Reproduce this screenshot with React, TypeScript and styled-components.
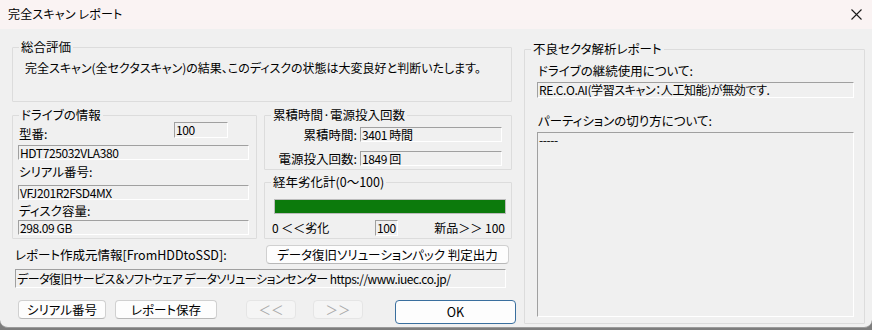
import React, { ReactElement } from 'react'
import styled, { createGlobalStyle } from 'styled-components'

const GlobalStyle = createGlobalStyle`
  html, body {
    margin: 0;
    padding: 0;
    background: #7d7d7d;
  }
  body {
    font-family: 'Noto Sans CJK JP', 'Noto Sans', sans-serif;
    font-size: 12px;
    color: #000;
    font-feature-settings: 'palt';
  }
`

const CloseIcon = (): ReactElement => (
  <svg width="11" height="11" viewBox="0 0 11 11">
    <path d="M0.5 0.5 L10.5 10.5 M10.5 0.5 L0.5 10.5" stroke="#1a1a1a" strokeWidth="1.1" />
  </svg>
)

const App: React.FC = (): ReactElement => {
  return (
    <Window>
      <GlobalStyle />
      <TitleBar>
        <Title>完全スキャン レポート</Title>
        <CloseButton>
          <CloseIcon />
        </CloseButton>
      </TitleBar>
      <Body>
        <LeftColumn>
          <Group $height={55} $top={18}>
            <Legend>総合評価</Legend>
            <SummaryText>
              完全スキャン(全セクタスキャン)の結果、このディスクの状態は大変良好と判断いたします。
            </SummaryText>
          </Group>

          <InfoRow>
            <Group $height={124}>
              <Legend>ドライブの情報</Legend>
              <DriveBody>
                <ModelRow>
                  <FieldLabel>型番:</FieldLabel>
                  <Field $width={54} $height={16}>100</Field>
                </ModelRow>
                <Field>HDT725032VLA380</Field>
                <FieldLabel $gap={4}>シリアル番号:</FieldLabel>
                <Field $gap={5}>VFJ201R2FSD4MX</Field>
                <FieldLabel $gap={3}>ディスク容量:</FieldLabel>
                <Field $gap={1}>298.09 GB</Field>
              </DriveBody>
            </Group>

            <StatsColumn>
              <Group $height={55}>
                <Legend>累積時間·電源投入回数</Legend>
                <StatsGrid>
                  <StatLabel>累積時間:</StatLabel>
                  <Field>3401 時間</Field>
                  <StatLabel>電源投入回数:</StatLabel>
                  <Field>1849 回</Field>
                </StatsGrid>
              </Group>

              <Group $height={57}>
                <Legend>経年劣化計(0〜100)</Legend>
                <HealthBar>
                  <HealthFill style={{ width: '100%' }} />
                </HealthBar>
                <ScaleRow>
                  <ScaleLeft>0 ＜＜劣化</ScaleLeft>
                  <Field $width={23} $height={16}>100</Field>
                  <ScaleRight>新品＞＞ 100</ScaleRight>
                </ScaleRow>
              </Group>
            </StatsColumn>
          </InfoRow>

          <ReportRow>
            <ReportLabel>レポート作成元情報[FromHDDtoSSD]:</ReportLabel>
            <Button $width={243}>データ復旧ソリューションパック 判定出力</Button>
          </ReportRow>

          <SourceField>
            データ復旧サービス＆ソフトウェア データソリューションセンター https://www.iuec.co.jp/
          </SourceField>

          <ButtonRow>
            <Button $width={88}>シリアル番号</Button>
            <Button $width={102} $gap={9}>レポート保存</Button>
            <Button $width={50} $gap={29} disabled>
              ＜＜
            </Button>
            <Button $width={50} $gap={17} disabled>
              ＞＞
            </Button>
            <Button $width={121} $gap={32} $primary>
              OK
            </Button>
          </ButtonRow>
        </LeftColumn>

        <Group $height={275} $top={20}>
          <Legend>不良セクタ解析レポート</Legend>
          <AnalysisBody>
            <FieldLabel>ドライブの継続使用について:</FieldLabel>
            <Field $gap={3} $height={16}>RE.C.O.AI(学習スキャン：人工知能)が無効です.</Field>
            <FieldLabel $gap={15}>パーティションの切り方について:</FieldLabel>
            <Field $gap={3} $height={185}>-----</Field>
          </AnalysisBody>
        </Group>
      </Body>
    </Window>
  )
}

const Window = styled.div`
  width: 872px;
  height: 327px;
  display: flex;
  flex-direction: column;
  background: #f0f0f0;
  border-bottom: 1px solid #9b9b9b;
  border-radius: 0 0 8px 8px;
  overflow: hidden;
`

const TitleBar = styled.div`
  height: 29px;
  flex: none;
  display: flex;
  align-items: center;
  justify-content: space-between;
  padding: 0 8px 3px 8px;
  box-sizing: border-box;
  background: #faf3f3;
`

const Title = styled.span`
  font-size: 12px;
  letter-spacing: 0.2px;
`

const CloseButton = styled.div`
  display: flex;
  padding-right: 2px;
  padding-top: 2px;
`

const Body = styled.div`
  display: grid;
  grid-template-columns: 500px 341px;
  column-gap: 12px;
  align-items: start;
  padding-left: 12px;
`

const LeftColumn = styled.div`
  display: flex;
  flex-direction: column;
`

const Group = styled.div<{ $height: number; $top?: number }>`
  position: relative;
  box-sizing: border-box;
  height: ${(p) => p.$height}px;
  margin-top: ${(p) => p.$top ?? 0}px;
  border: 1px solid #dcdcdc;
  border-radius: 1px;
`

const Legend = styled.span`
  position: absolute;
  top: -9px;
  left: 6px;
  padding: 0 2px;
  background: #f0f0f0;
  line-height: 16px;
  font-size: 12.5px;
`

const SummaryText = styled.div`
  padding: 12px 0 0 12px;
  line-height: 16px;
  font-size: 12px;
`

const InfoRow = styled.div`
  display: grid;
  grid-template-columns: 245px 248px;
  column-gap: 7px;
  margin-top: 13px;
`

const DriveBody = styled.div`
  display: flex;
  flex-direction: column;
  padding: 6px 7px 0 5px;
`

const ModelRow = styled.div`
  display: flex;
  align-items: flex-start;
  height: 23px;

  & > span:first-child {
    width: 155px;
    padding-top: 4px;
    margin-top: 0;
  }
`

const FieldLabel = styled.span<{ $gap?: number }>`
  display: block;
  margin-top: ${(p) => p.$gap ?? 0}px;
  padding-left: 1px;
  line-height: 16px;
  font-size: 12.5px;
`

const Field = styled.div<{ $width?: number; $height?: number; $gap?: number }>`
  box-sizing: border-box;
  width: ${(p) => (p.$width ? `${p.$width}px` : 'auto')};
  height: ${(p) => p.$height ?? 15}px;
  margin-top: ${(p) => p.$gap ?? 0}px;
  padding: 0 2px 0 1px;
  border-top: 1px solid #a0a0a0;
  border-left: 1px solid #a0a0a0;
  border-right: 1px solid #ffffff;
  border-bottom: 1px solid #ffffff;
  line-height: 13px;
  font-size: 12px;
  letter-spacing: -0.4px;
  white-space: nowrap;
  overflow: hidden;
`

const StatsColumn = styled.div`
  display: flex;
  flex-direction: column;
  gap: 12px;
`

const StatsGrid = styled.div`
  display: grid;
  grid-template-columns: 92px 142px;
  column-gap: 3px;
  row-gap: 9px;
  align-items: center;
  padding-top: 11px;
`

const StatLabel = styled.span`
  text-align: right;
  line-height: 15px;
  font-size: 12.5px;
`

const HealthBar = styled.div`
  box-sizing: border-box;
  width: 232px;
  height: 15px;
  margin: 16px 0 0 9px;
  border: 1px solid #bcbcbc;
  background: #e6e6e6;
`

const HealthFill = styled.div`
  height: 100%;
  background: #0c7a0c;
`

const ScaleRow = styled.div`
  display: flex;
  align-items: center;
  margin-top: 6px;
  padding: 0 6px 0 7px;
  line-height: 16px;
  font-size: 12px;
`

const ScaleLeft = styled.span`
  width: 103px;
`

const ScaleRight = styled.span`
  flex: 1;
  text-align: right;
`

const ReportRow = styled.div`
  display: flex;
  align-items: center;
  justify-content: space-between;
  margin-top: 6px;
  padding: 0 3px 0 3px;
`

const ReportLabel = styled.span`
  font-size: 12.5px;
  line-height: 16px;
`

const SourceField = styled(Field)`
  height: 19px;
  width: 491px;
  margin: 5px 0 0 3px;
  line-height: 17px;
  font-size: 12px;
  letter-spacing: -0.5px;
  padding-left: 1px;
`

const ButtonRow = styled.div`
  display: flex;
  align-items: flex-start;
  margin-top: 12px;
  padding-left: 6px;
`

const Button = styled.button<{ $width: number; $gap?: number; $primary?: boolean }>`
  box-sizing: border-box;
  flex: none;
  width: ${(p) => p.$width}px;
  height: ${(p) => (p.$primary ? 24 : 19)}px;
  margin-left: ${(p) => p.$gap ?? 0}px;
  padding: 0;
  font-family: inherit;
  font-size: 12.5px;
  line-height: 16px;
  color: #000;
  background: #fdfdfd;
  border: 1px solid ${(p) => (p.$primary ? '#3a6f9e' : '#d0d0d0')};
  border-bottom-color: ${(p) => (p.$primary ? '#3a6f9e' : '#b8b8b8')};
  border-radius: 4px;
  font-feature-settings: 'palt';

  &:disabled {
    color: #a8a8a8;
    background: #f5f5f5;
    border-color: #e5e5e5;
  }
`

const AnalysisBody = styled.div`
  display: flex;
  flex-direction: column;
  padding: 13px 10px 0 12px;

  & > span {
    padding-left: 1px;
  }
`

export default App
